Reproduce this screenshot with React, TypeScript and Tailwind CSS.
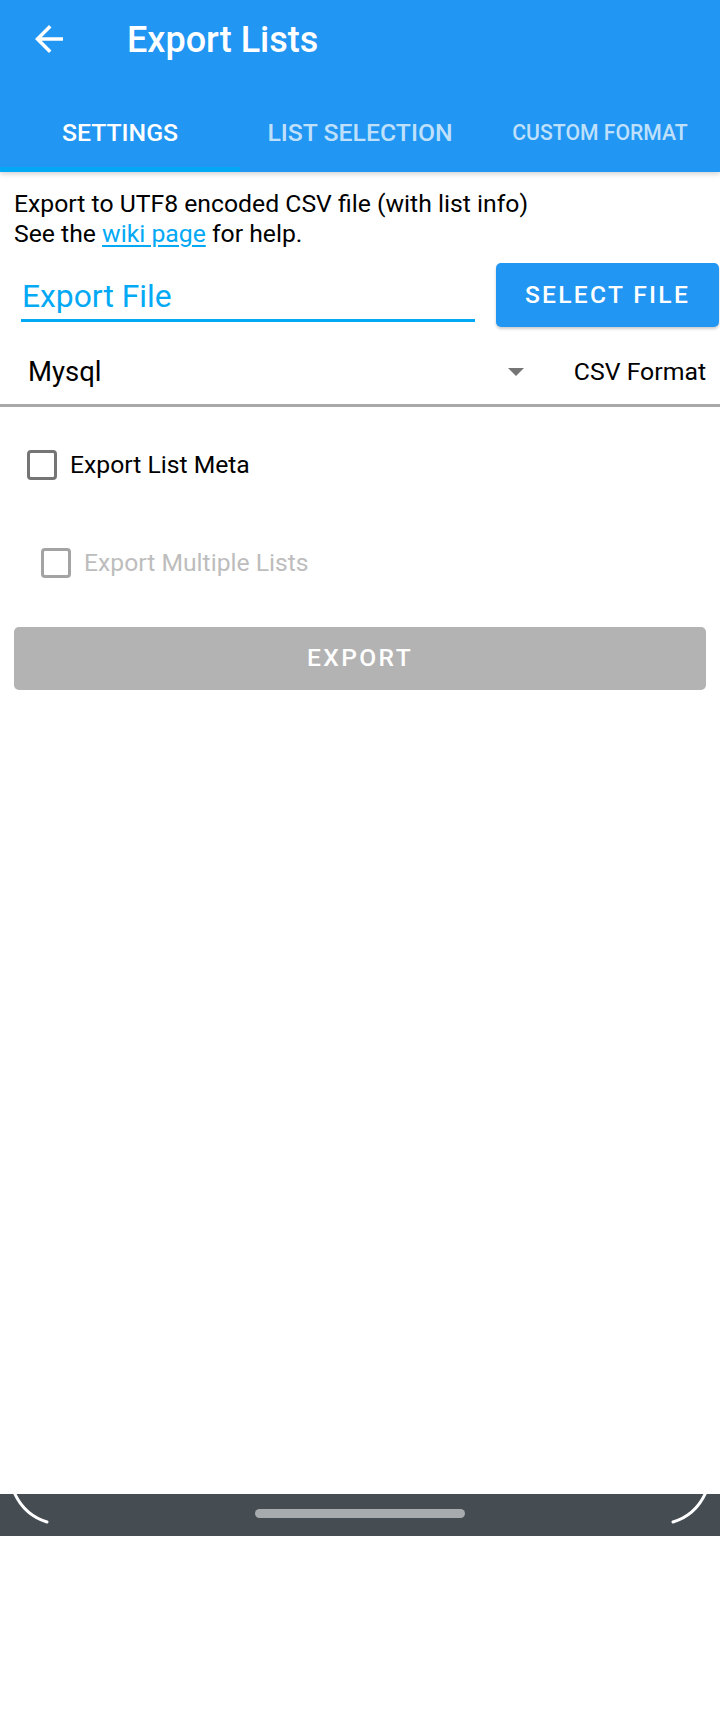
import React from "react";

const font = { fontFamily: "Roboto, 'Noto Sans', sans-serif" };

function BackArrow() {
  return (
    <svg width="42" height="42" viewBox="0 0 24 24" fill="white">
      <path d="M20 11H7.83l5.59-5.59L12 4l-8 8 8 8 1.41-1.41L7.83 13H20v-2z" />
    </svg>
  );
}

function Checkbox({ disabled }: { disabled?: boolean }) {
  return (
    <div
      className={
        "w-[30px] h-[30px] rounded-[4px] border-[3px] shrink-0 " +
        (disabled ? "border-[#a3a3a3]" : "border-[#757575]")
      }
    />
  );
}

export default function App() {
  return (
    <div className="w-[720px] h-[1712px] flex flex-col bg-white font-['Roboto']" style={font}>
      {/* App bar */}
      <div className="relative z-10 bg-[#2196f3] h-[172px] flex flex-col shadow-[0_2px_5px_rgba(0,0,0,0.18)]">
        <div className="h-[80px] flex items-center">
          <div className="ml-[28px] mt-[-2px] flex items-center">
            <BackArrow />
          </div>
          <div className="ml-[57px] text-white text-[36px] font-medium leading-none">Export Lists</div>
        </div>
        <div className="flex-1 flex">
          <div className="w-[240px] flex flex-col">
            <div className="flex-1 flex items-center justify-center pt-[18px] text-white text-[24.8px] font-medium">SETTINGS</div>
            <div className="h-[5px] bg-[#03a9f4]" />
          </div>
          <div className="w-[240px] flex flex-col">
            <div className="flex-1 flex items-center justify-center pt-[18px] text-[#bfe0fb] text-[24.8px] font-medium">LIST SELECTION</div>
            <div className="h-[5px]" />
          </div>
          <div className="w-[240px] flex flex-col">
            <div className="flex-1 flex items-center justify-center pt-[18px] text-[#bfe0fb] text-[21.2px] font-medium">CUSTOM FORMAT</div>
            <div className="h-[5px]" />
          </div>
        </div>
      </div>

      {/* Content */}
      <div className="flex-1 flex flex-col">
        <div className="pt-[17px] pl-[14px] text-[24.75px] leading-[30px] text-black">
          <div>Export to UTF8 encoded CSV file (with list info)</div>
          <div>
            See the <span className="text-[#03a9f4] underline underline-offset-[3px]">wiki page</span> for help.
          </div>
        </div>

        <div className="flex items-start mt-[14px]">
          <div className="ml-[21px] w-[454px] h-[59px] border-b-[3px] border-[#03a9f4] pt-[15px]">
            <div className="text-[#03a9f4] text-[31.8px] leading-[36px] pl-[1px]">Export File</div>
          </div>
          <div className="ml-[21px] w-[223px] h-[64px] rounded-[5px] bg-[#2196f3] shadow-[0_2px_3px_rgba(0,0,0,0.2)] flex items-center justify-center text-white text-[24.6px] font-medium tracking-[2.3px]">
            SELECT FILE
          </div>
        </div>

        <div className="h-[80px] border-b-[3px] border-[#a8a8a8] flex items-center pt-[13px]">
          <div className="pl-[28px] flex-1 text-[27.5px] text-black">Mysql</div>
          <svg width="16" height="8" viewBox="0 0 16 8" className="mr-[50px]">
            <path d="M0 0 L16 0 L8 8 Z" fill="#757575" />
          </svg>
          <div className="pr-[14px] text-[24.8px] text-black">CSV Format</div>
        </div>

        <div className="mt-[43px] pl-[27px] flex items-center gap-[13px] h-[30px]">
          <Checkbox />
          <div className="text-[24.7px] text-black">Export List Meta</div>
        </div>

        <div className="mt-[68px] pl-[41px] flex items-center gap-[13px] h-[30px]">
          <Checkbox disabled />
          <div className="text-[24.7px] text-[#bdbdbd]">Export Multiple Lists</div>
        </div>

        <div className="mt-[49px] mx-[14px] h-[63px] rounded-[5px] bg-[#b3b3b3] flex items-center justify-center text-white text-[24.6px] font-medium tracking-[2.4px]">
          EXPORT
        </div>
      </div>

      {/* Navigation bar */}
      <div className="relative h-[42px] bg-[#454c52] flex items-center justify-center">
        <div className="w-[210px] h-[9px] rounded-full bg-[#a7abae] mt-[-3px]" />
        <svg className="absolute left-0 top-0" width="60" height="42" viewBox="0 0 60 42">
          <path d="M14 -2 Q24 21 47 28" stroke="white" strokeWidth="3" fill="none" strokeLinecap="round" />
        </svg>
        <svg className="absolute right-0 top-0" width="60" height="42" viewBox="0 0 60 42">
          <path d="M46 -2 Q36 21 13 28" stroke="white" strokeWidth="3" fill="none" strokeLinecap="round" />
        </svg>
      </div>
      <div className="h-[176px] bg-white" />
    </div>
  );
}
